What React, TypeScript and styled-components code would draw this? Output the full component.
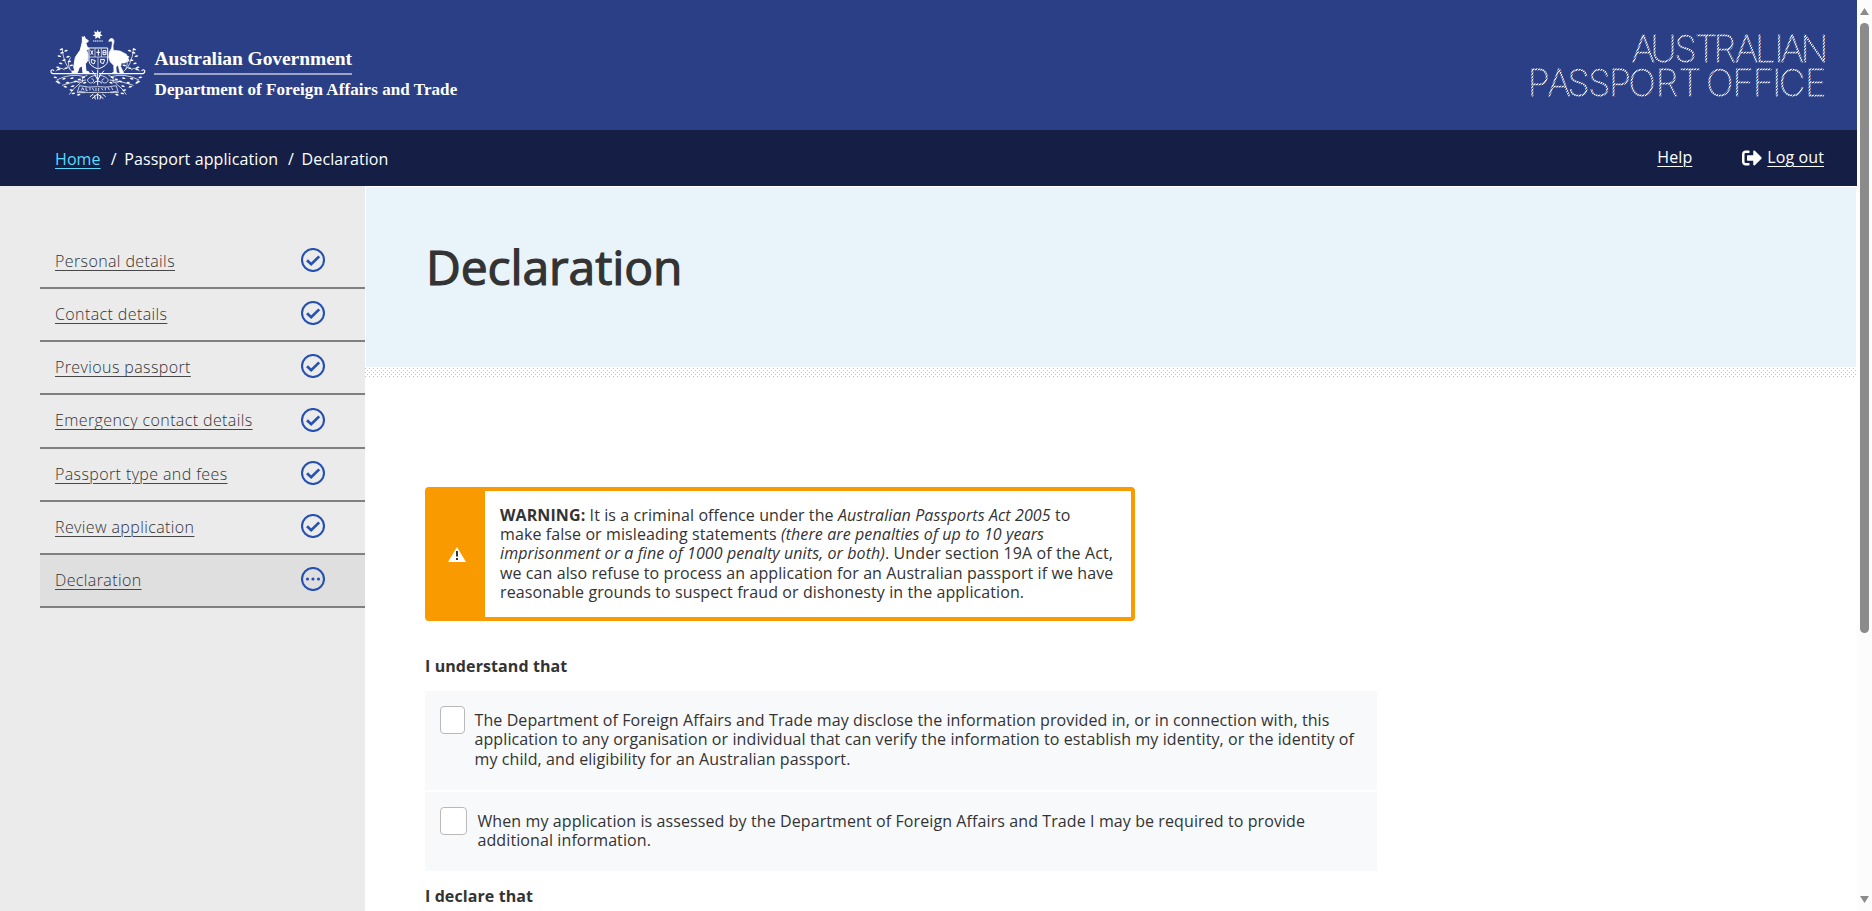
import React from 'react';
import styled, { createGlobalStyle } from 'styled-components';
import { FaSignOutAlt } from 'react-icons/fa';

const GlobalStyle = createGlobalStyle`
  *, *::before, *::after { box-sizing: border-box; }
  body {
    margin: 0;
    overflow: hidden;
    background: #fff;
    color: #333;
    font: 400 16px/19.2px "Open Sans", sans-serif;
    letter-spacing: 0.097px;
  }
`;

const Viewport = styled.div`
  display: flex;
  height: 911px;
  overflow: hidden;
`;
const Page = styled.div`
  flex: 1;
  min-width: 0;
  display: flex;
  flex-direction: column;
`;
const Header = styled.header`
  flex: none;
  height: 130px;
  padding: 20px 31px 0 40px;
  display: flex;
  justify-content: space-between;
  background: #2b3f86;
`;
const NavBar = styled.nav`
  flex: none;
  height: 56px;
  padding: 0 33px 0 55px;
  display: flex;
  justify-content: space-between;
  background: #151f45;
  color: #fff;
  line-height: 24px;
  letter-spacing: 0.1px;
`;
const Crumbs = styled.div`
  display: flex;
  padding-top: 17px;
`;
const Slash = styled.span`
  margin: 0 7.6px 0 10px;
`;
const Actions = styled.div`
  display: flex;
  align-items: flex-start;
  padding-top: 15px;
`;
const Link = styled.a<{ $tone: string }>`
  color: ${(p) => p.$tone};
  text-decoration: underline 1px;
  text-underline-offset: 3px;
`;
const LogOut = styled.span`
  display: flex;
  align-items: center;
  gap: 5px;
  margin-left: 50px;

  svg { position: relative; top: 1px; }
`;
const Body = styled.div`
  flex: 1;
  min-height: 0;
  display: flex;
`;
const Sidebar = styled.aside`
  flex: none;
  width: 365px;
  padding: 50px 0 0 40px;
  background: #ebebeb;
`;
const Step = styled.div<{ $active?: boolean }>`
  height: 53.17px;
  padding: 0 40px 0 15px;
  display: flex;
  justify-content: space-between;
  align-items: center;
  border-bottom: 2px solid #808080;
  background: ${(p) => (p.$active ? '#dfdfdf' : 'transparent')};
`;
const StepLink = styled.a`
  color: #333;
  font-weight: 300;
  letter-spacing: 0.39px;
  text-decoration: underline 1px #484848;
  text-underline-offset: 3px;
`;
const StepIcon = styled.svg`
  display: block;
  width: 24px;
  height: 24px;
  margin-bottom: 3px;
`;
const Main = styled.main`
  flex: 1;
  min-width: 0;
`;
const Banner = styled.div`
  height: 180px;
  margin: 1px 1px 0;
  padding: 47px 0 0 60px;
  background: #e8f4fa;
`;
const Title = styled.h1`
  margin: 0;
  font-size: 48px;
  font-weight: 400;
  line-height: 65px;
  letter-spacing: -0.1px;
  -webkit-text-stroke: 1.2px #333;
`;
const DotStrip = styled.div`
  height: 10px;
  background-image:
    conic-gradient(from 0deg at 1px 1px, transparent 270deg, #bdbdbd 0),
    conic-gradient(from 0deg at 1px 1px, transparent 270deg, #bdbdbd 0);
  background-size: 4px 4px;
  background-position: 0 1px, 2px 3px;
`;
const Content = styled.div`
  padding: 110px 0 0 60px;
`;
const Warning = styled.section`
  width: 710px;
  height: 134px;
  display: flex;
  border: 4px solid #f89a00;
  border-radius: 4px;
  background: #fff;
`;
const WarningMark = styled.div`
  width: 56px;
  display: flex;
  align-items: center;
  justify-content: center;
  background: #f89a00;
`;
const WarningText = styled.p`
  margin: 0;
  padding: 15px 0 0 15px;
  white-space: nowrap;
`;
const Heading = styled.h2<{ $top: number; $bottom: number }>`
  margin: ${(p) => p.$top}px 0 ${(p) => p.$bottom}px;
  font-size: 16px;
  font-weight: 700;
  line-height: 19px;
`;
const Options = styled.div`
  width: 952px;
  display: grid;
  gap: 2px;
`;
const Option = styled.label<{ $height: number; $gap: number }>`
  height: ${(p) => p.$height}px;
  padding: 15px 0 0 15px;
  display: flex;
  align-items: flex-start;
  gap: ${(p) => p.$gap}px;
  background: #f8f9fb;
`;
const Box = styled.span<{ $width: number }>`
  flex: none;
  width: ${(p) => p.$width}px;
  height: 28px;
  border: 1px solid #b9b9b9;
  border-radius: 4px;
  background: #fff;
`;
const OptionText = styled.span`
  padding-top: 5.2px;
  white-space: nowrap;
`;
const ScrollTrack = styled.div`
  flex: none;
  width: 15px;
  padding: 7px 0 8px 3px;
  display: flex;
  flex-direction: column;
  background: #fcfcfc;
`;
const ScrollThumb = styled.div`
  width: 9px;
  height: 610px;
  margin: 8px 0 auto;
  border-radius: 5px;
  background: #8b8b8b;
`;

const leaf = (x: number, y: number, f: 1 | -1) =>
  `M${x} ${y}q${6 * f} -7 ${12 * f} -3q${-4 * f} 6 ${-12 * f} 3z`;

const half = [
  leaf(60, 100, 1), leaf(58, 90, 1), leaf(72, 94, 1), leaf(64, 110, -1), leaf(66, 122, 1), leaf(78, 112, 1),
  leaf(68, 132, -1), leaf(82, 126, 1), leaf(60, 144, -1), leaf(72, 146, 1), leaf(88, 138, 1), leaf(50, 150, 1),
  leaf(52, 174, -1), leaf(46, 186, 1), leaf(66, 178, 1), leaf(62, 190, -1), leaf(76, 190, 1), leaf(90, 176, 1),
  leaf(82, 202, -1), leaf(92, 200, 1), leaf(100, 186, 1), leaf(100, 212, -1), leaf(94, 222, 1), leaf(112, 180, 1),
  leaf(124, 174, 1), leaf(110, 226, 1), leaf(128, 190, 1),
].join('');

function HalfWreath() {
  return (
    <g>
      <path d={half} fill="#fff" />
      <g fill="none" stroke="#fff" strokeWidth="2.2">
        <path d="M96 154Q72 138 66 84M90 148Q80 128 92 112M48 154Q60 138 74 150" />
        <path d="M134 170Q92 158 50 180M138 180Q100 184 66 196M120 190Q98 206 88 224" />
        <path d="M170 161H44Q31 161 33 152Q38 146 42 153" strokeWidth="3.6" />
        <path d="M170 166Q148 168 142 180Q146 192 158 188Q166 178 154 176M142 166Q124 170 128 186Q118 192 108 184" />
        <path d="M118 198L112 218H136M118 197Q146 204 173 200M116 214Q146 220 173 217" />
      </g>
    </g>
  );
}

function GovernmentLogo() {
  return (
    <svg width="430" height="90" viewBox="0 0 430 90">
      <g transform="scale(.33333)">
        <polygon
          fill="#fff"
          points="173,29 176,37 184,34 181,42 188,47 180,49 181,57 173,52 166,57 166,49 158,47 165,42 162,34 170,37"
        />
        <path d="M159 63H189" stroke="#fff" strokeWidth="3.5" strokeDasharray="4 1.5" />
        <HalfWreath />
        <g transform="matrix(-1 0 0 1 347 0)"><HalfWreath /></g>
        <g fill="#fff" stroke="#fff" strokeWidth="3" strokeLinejoin="round">
          <path d="M127 50L130 53L133 49L136 56L145 62L143 66L137 68L141 80L147 85L145 88L139 88L144 104L143 122L136 132L138 153L147 156V159H129L127 138L118 142L112 158H96V154L105 152L101 142L106 112L121 90L127 66Z" />
          <path d="M206 64L210 57L216 55L221 59L222 66L219 77L220 91L240 93L259 103L268 124L258 121L256 129L244 129L242 140L250 156V159H240L234 134L228 142L229 156L232 159H217L222 156L221 136L211 126L206 112L208 96L215 84L217 70L216 63Z" strokeWidth="2" />
        </g>
        <path d="M147 84H203V124Q201 138 174 147Q149 138 147 124Z" fill="#2b3f86" stroke="#fff" strokeWidth="3" />
        <path d="M147 111H202M165 85V111M184 85V111M174 112V144" stroke="#fff" strokeWidth="2" />
        <path d="M152 91l7 13M159 91l-7 13M175 88v19M169 97h11M189 92h9v12h-9zM189 98h9M154 118l12 4-4 10-8-4zM182 118l12 1-4 12-8-3z" fill="none" stroke="#fff" strokeWidth="3" />
        <path d="M173 150V196M173 180Q164 160 156 152M173 180Q182 160 192 152M161 190Q173 176 186 190M173 220V238M173 222L156 236M173 222L190 236M160 222L150 230M187 222L197 230M163 226L166 238M182 226L180 238" fill="none" stroke="#fff" strokeWidth="3" />
        <path d="M124 211l4-8 4 8M138 202v9h5M150 203v8M157 204l5 8M168 204v9M176 204v9M184 204l5 7M196 203v8M204 202l4 8M214 202l5 8" fill="none" stroke="#fff" strokeWidth="2.4" />
      </g>
      <g fill="#fff" fontFamily="'Liberation Serif', serif" fontWeight="700" letterSpacing="0">
        <text x="114.6" y="44.5" fontSize="19.5" textLength="197.4">Australian Government</text>
        <text x="114.6" y="75" fontSize="17" textLength="302.6">Department of Foreign Affairs and Trade</text>
      </g>
      <rect x="114" y="53.3" width="198" height="1.4" fill="#cdd2e4" />
    </svg>
  );
}

const officeTop = [131.8, 150.5, 174.5, 195, 213.4, 235, 255, 274.5, 280.5, 300.6];
const officeBottom = [27.7, 47.6, 67.6, 88.3, 109, 128.5, 155.7, 179, 195, 206.2, 232.5, 252.7, 272.3, 279, 305];

function PassportOfficeLogo() {
  return (
    <svg width="326" height="100" viewBox="0 0 326 100">
      <defs>
        <pattern id="perforation" width="2.1" height="10" patternUnits="userSpaceOnUse" patternTransform="rotate(40)">
          <rect width="1.05" height="10" fill="#fff" />
        </pattern>
      </defs>
      <g
        fill="url(#perforation)"
        stroke="url(#perforation)"
        strokeWidth="1"
        fontFamily="Inter, sans-serif"
        fontWeight="100"
        fontSize="36"
        letterSpacing="0"
      >
        <text y="42.3" x={officeTop.join(' ')}>AUSTRALIAN</text>
        <text y="75.7" x={officeBottom.join(' ')}>PASSPORT OFFICE</text>
      </g>
    </svg>
  );
}

function StatusIcon({ done }: { done: boolean }) {
  return (
    <StepIcon viewBox="0 0 24 24" fill="none" stroke="#2751b1">
      <circle cx="12" cy="12" r="11" strokeWidth="2.1" />
      {done ? (
        <path d="M6 12.2L10.2 16.2L18.2 8.4" strokeWidth="2.7" />
      ) : (
        <g fill="#2751b1" stroke="none">
          <circle cx="6.5" cy="12" r="1.6" />
          <circle cx="12" cy="12" r="1.6" />
          <circle cx="17.5" cy="12" r="1.6" />
        </g>
      )}
    </StepIcon>
  );
}

const steps = [
  'Personal details',
  'Contact details',
  'Previous passport',
  'Emergency contact details',
  'Passport type and fees',
  'Review application',
  'Declaration',
];

export default function App() {
  return (
    <Viewport>
      <GlobalStyle />
      <Page>
        <Header>
          <GovernmentLogo />
          <PassportOfficeLogo />
        </Header>
        <NavBar>
          <Crumbs>
            <Link $tone="#5fd9fb">Home</Link>
            <Slash>/</Slash>
            <span>Passport application</span>
            <Slash>/</Slash>
            <span>Declaration</span>
          </Crumbs>
          <Actions>
            <Link $tone="#fff">Help</Link>
            <LogOut>
              <FaSignOutAlt size={20} />
              <Link $tone="#fff">Log out</Link>
            </LogOut>
          </Actions>
        </NavBar>
        <Body>
          <Sidebar>
            {steps.map((name) => (
              <Step key={name} $active={name === 'Declaration'}>
                <StepLink>{name}</StepLink>
                <StatusIcon done={name !== 'Declaration'} />
              </Step>
            ))}
          </Sidebar>
          <Main>
            <Banner>
              <Title>Declaration</Title>
            </Banner>
            <DotStrip />
            <Content>
              <Warning>
                <WarningMark>
                  <svg width="18" height="15" viewBox="0 0 18 15">
                    <path d="M9 0L18 15H0Z" fill="#fff" />
                    <path d="M8 4h2v5.6H8zM8 11h2v2H8z" fill="#333" />
                  </svg>
                </WarningMark>
                <WarningText>
                  <b>WARNING:</b> It is a criminal offence under the <i>Australian Passports Act 2005</i> to<br />
                  make false or misleading statements <i>(there are penalties of up to 10 years</i><br />
                  <i>imprisonment or a fine of 1000 penalty units, or both)</i>. Under section 19A of the Act,<br />
                  we can also refuse to process an application for an Australian passport if we have<br />
                  reasonable grounds to suspect fraud or dishonesty in the application.
                </WarningText>
              </Warning>
              <Heading $top={36} $bottom={15}>I understand that</Heading>
              <Options>
                <Option $height={99} $gap={9.5}>
                  <Box $width={25} />
                  <OptionText>
                    The Department of Foreign Affairs and Trade may disclose the information provided in, or in connection with, this<br />
                    application to any organisation or individual that can verify the information to establish my identity, or the identity of<br />
                    my child, and eligibility for an Australian passport.
                  </OptionText>
                </Option>
                <Option $height={79} $gap={10.5}>
                  <Box $width={27} />
                  <OptionText>
                    When my application is assessed by the Department of Foreign Affairs and Trade I may be required to provide<br />
                    additional information.
                  </OptionText>
                </Option>
              </Options>
              <Heading $top={16} $bottom={0}>I declare that</Heading>
            </Content>
          </Main>
        </Body>
      </Page>
      <ScrollTrack>
        <svg width="9" height="8" viewBox="0 0 9 8"><path d="M4.5 1L9 8H0Z" fill="#8b8b8b" /></svg>
        <ScrollThumb />
        <svg width="9" height="7" viewBox="0 0 9 7"><path d="M4.5 7L0 0H9Z" fill="#8b8b8b" /></svg>
      </ScrollTrack>
    </Viewport>
  );
}
